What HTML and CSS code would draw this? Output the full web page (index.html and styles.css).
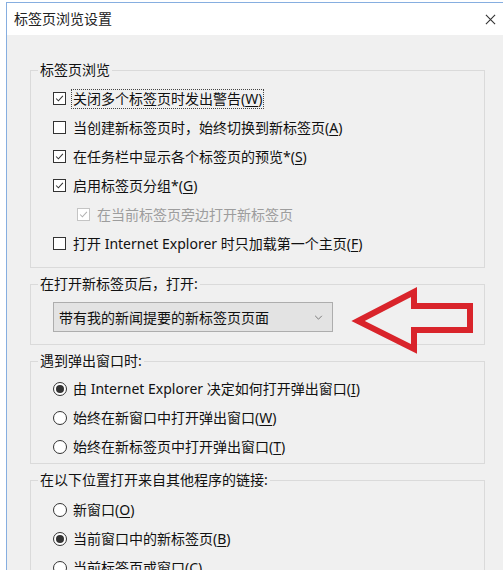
FILE: index.html
```html
<!DOCTYPE html>
<html>
<head>
    <meta charset="utf-8">
    <title>标签页浏览设置</title>
    <link rel="stylesheet" href="styles.css">
</head>
<body>
    <div class="dialog">
        <!-- Barra de título -->
        <div class="titlebar">
            <span class="title">标签页浏览设置</span>
            <svg class="close" viewBox="0 0 12 12"><path d="M1 1L11 11M11 1L1 11"/></svg>
        </div>

        <div class="content">
            <!-- Opciones de pestañas -->
            <fieldset class="group group-tabs">
                <legend>标签页浏览</legend>
                <div class="row">
                    <span class="check on"><svg viewBox="0 0 13 13"><path d="M2.5 6.5L5.2 9.3L10.5 3.5"/></svg></span>
                    <span class="label focus">关闭多个标签页时发出警告(<u>W</u>)</span>
                </div>
                <div class="row">
                    <span class="check"></span>
                    <span class="label">当创建新标签页时，始终切换到新标签页(<u>A</u>)</span>
                </div>
                <div class="row">
                    <span class="check on"><svg viewBox="0 0 13 13"><path d="M2.5 6.5L5.2 9.3L10.5 3.5"/></svg></span>
                    <span class="label">在任务栏中显示各个标签页的预览*(<u>S</u>)</span>
                </div>
                <div class="row">
                    <span class="check on"><svg viewBox="0 0 13 13"><path d="M2.5 6.5L5.2 9.3L10.5 3.5"/></svg></span>
                    <span class="label">启用标签页分组*(<u>G</u>)</span>
                </div>
                <div class="row sub disabled">
                    <span class="check on"><svg viewBox="0 0 13 13"><path d="M2.5 6.5L5.2 9.3L10.5 3.5"/></svg></span>
                    <span class="label">在当前标签页旁边打开新标签页</span>
                </div>
                <div class="row">
                    <span class="check"></span>
                    <span class="label">打开 Internet Explorer 时只加载第一个主页(<u>F</u>)</span>
                </div>
            </fieldset>

            <!-- Nueva pestaña -->
            <fieldset class="group group-newtab">
                <legend>在打开新标签页后，打开:</legend>
                <div class="select">
                    <span>带有我的新闻提要的新标签页页面</span>
                    <svg class="chevron" viewBox="0 0 10 6"><path d="M1 1L5 5L9 1"/></svg>
                </div>
            </fieldset>

            <!-- Ventanas emergentes -->
            <fieldset class="group group-popup">
                <legend>遇到弹出窗口时:</legend>
                <div class="row">
                    <span class="radio on"></span>
                    <span class="label">由 Internet Explorer 决定如何打开弹出窗口(<u>I</u>)</span>
                </div>
                <div class="row">
                    <span class="radio"></span>
                    <span class="label">始终在新窗口中打开弹出窗口(<u>W</u>)</span>
                </div>
                <div class="row">
                    <span class="radio"></span>
                    <span class="label">始终在新标签页中打开弹出窗口(<u>T</u>)</span>
                </div>
            </fieldset>

            <!-- Enlaces de otros programas -->
            <fieldset class="group group-links">
                <legend>在以下位置打开来自其他程序的链接:</legend>
                <div class="row">
                    <span class="radio"></span>
                    <span class="label">新窗口(<u>O</u>)</span>
                </div>
                <div class="row">
                    <span class="radio on"></span>
                    <span class="label">当前窗口中的新标签页(<u>B</u>)</span>
                </div>
                <div class="row">
                    <span class="radio"></span>
                    <span class="label">当前标签页或窗口(<u>C</u>)</span>
                </div>
            </fieldset>
        </div>
    </div>

    <!-- Flecha roja de anotación -->
    <svg class="arrow" viewBox="0 0 503 570">
        <path d="M358 321L414 292L414 306L470 306L470 330L414 330L414 349Z"/>
    </svg>
</body>
</html>
```

FILE: styles.css
```css
html, body { margin: 0; overflow: hidden; background: #fff; }
body { font-family: "Noto Sans", "Noto Sans CJK SC", sans-serif; font-size: 14px; color: #111; position: relative; height: 570px; }

.dialog { margin: 2px 0 0 6px; border-top: 1px solid #86aee0; border-left: 1px solid #86aee0; height: 620px; display: flex; flex-direction: column; }
.titlebar { height: 32px; flex: none; display: flex; align-items: center; justify-content: space-between; padding: 0 7px 0 7px; background: #fff; }
.title { line-height: 20px; color: #222; }
.close { width: 11px; height: 11px; fill: none; stroke: #333; stroke-width: 1.2; }

.content { flex: 1; background: #f0f0f0; padding: 25px 0 0 23px; }
.group { width: 455px; box-sizing: border-box; margin: 0 0 6px 0; border: 1px solid #dadada; padding: 4px 0 9px 22px; min-width: 0; }
.group legend { margin-left: -15px; padding: 0 2px; line-height: 20px; }
.group-newtab { padding-top: 8px; padding-bottom: 12px; }
.group-popup { padding-top: 3px; padding-bottom: 2px; }
.group-links { padding-top: 5px; }

.row { height: 29px; display: flex; align-items: center; }
.row.sub { padding-left: 24px; }
.label { border: 1px dotted transparent; padding: 0 1px; line-height: 18px; }
.label.focus { border-color: #444; }
.label u { text-underline-offset: 2px; }

.check { width: 13px; height: 13px; box-sizing: border-box; border: 1px solid #333; background: #fff; margin-right: 5px; flex: none; display: flex; }
.check svg { width: 11px; height: 11px; fill: none; stroke: #333; stroke-width: 1.2; }
.disabled .check { border-color: #c4c4c4; }
.disabled .check svg { stroke: #b0b0b0; }
.disabled .label { color: #9d9d9d; }

.radio { width: 14px; height: 14px; box-sizing: border-box; border: 1px solid #333; border-radius: 50%; background: #fff; margin-right: 4px; flex: none; display: flex; align-items: center; justify-content: center; }
.radio.on::after { content: ""; width: 8px; height: 8px; border-radius: 50%; background: #333; }

.select { width: 280px; height: 30px; box-sizing: border-box; border: 1px solid #adadad; background: #e3e3e3; display: flex; align-items: center; justify-content: space-between; padding: 0 9px 0 5px; }
.chevron { width: 9px; height: 5px; fill: none; stroke: #666; stroke-width: 1; }

.arrow { position: absolute; left: 0; top: 0; width: 503px; height: 570px; pointer-events: none; }
.arrow path { fill: none; stroke: #d9242b; stroke-width: 6; stroke-linejoin: miter; }
```
